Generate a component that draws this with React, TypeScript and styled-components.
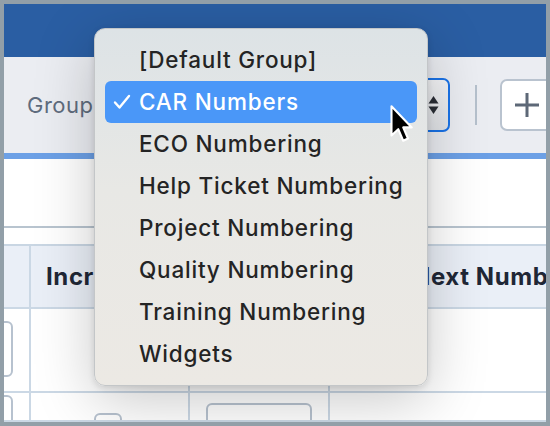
import React from 'react';
import styled, { createGlobalStyle } from 'styled-components';

const GlobalStyle = createGlobalStyle`
  body {
    margin: 0;
    background: #929fa8;
  }
`;

const Frame = styled.div`
  box-sizing: border-box;
  width: 550px;
  height: 426px;
  border: 4px solid #929fa8;
  overflow: hidden;
  position: relative;
  display: flex;
  flex-direction: column;
  background: #fff;
  font-family: 'Inter', 'Liberation Sans', sans-serif;
`;

const TopBar = styled.div`
  flex: 0 0 53px;
  background: #2a5ea3;
`;

const Toolbar = styled.div`
  flex: 0 0 96px;
  background: #ebedf2;
  display: flex;
  align-items: center;
  padding-left: 23px;
  overflow: hidden;
  & > * {
    flex-shrink: 0;
  }
`;

const GroupLabel = styled.span`
  font-size: 22px;
  letter-spacing: 0.5px;
  color: #5f6c7e;
  width: 130px;
`;

const SelectBox = styled.div`
  box-sizing: border-box;
  width: 293px;
  height: 54px;
  border: 2px solid #1a73e8;
  border-radius: 7px;
  background: linear-gradient(#f4f5f7, #e2e4e8);
  display: flex;
  align-items: center;
  justify-content: flex-end;
  padding-right: 9px;
`;

const Divider = styled.div`
  width: 2px;
  height: 40px;
  background: #b5c0cc;
  margin-left: 25px;
`;

const PlusButton = styled.div`
  box-sizing: border-box;
  width: 60px;
  height: 52px;
  margin-left: 23px;
  border: 2px solid #b9c3cf;
  border-radius: 7px;
  background: #fff;
  display: flex;
  align-items: center;
  padding-left: 12px;
`;

const AccentLine = styled.div`
  flex: 0 0 6px;
  background: #6ca0e6;
`;

const Blank = styled.div`
  flex: 0 0 67px;
  border-bottom: 2px solid #b8c4cf;
`;

const Strip = styled.div`
  flex: 0 0 16px;
  border-bottom: 2px solid #c9d6e3;
`;

const Table = styled.div`
  display: grid;
  grid-template-columns: 27px 159px 140px 1fr;
  grid-template-rows: 63px 84px 1fr;
  flex: 1;
`;

const Cell = styled.div<{ $head?: boolean; $last?: boolean }>`
  box-sizing: border-box;
  position: relative;
  border-bottom: 2px solid #cbd8e5;
  border-right: ${(p) => (p.$last ? 'none' : '2px solid #cbd8e5')};
  background: ${(p) => (p.$head ? '#eaeff7' : '#fff')};
  display: flex;
  align-items: center;
  overflow: hidden;
`;

const HeadText = styled.span<{ $pad: number }>`
  padding-left: ${(p) => p.$pad}px;
  font-size: 24px;
  letter-spacing: 0.6px;
  font-weight: 700;
  color: #1f2736;
  white-space: nowrap;
`;

const Field = styled.div<{ $left: number; $top: number; $w: number; $h: number }>`
  position: absolute;
  box-sizing: border-box;
  left: ${(p) => p.$left}px;
  top: ${(p) => p.$top}px;
  width: ${(p) => p.$w}px;
  height: ${(p) => p.$h}px;
  border: 2px solid #b7c2cf;
  border-radius: 6px;
  background: #fff;
`;

const Menu = styled.div`
  position: absolute;
  left: 90px;
  top: 24px;
  width: 334px;
  box-sizing: border-box;
  padding: 10px 10px;
  border-radius: 11px;
  border: 1px solid #c3c6c8;
  background: linear-gradient(#dde3e6 0%, #e8e8e5 45%, #ece9e4 100%);
  box-shadow: 0 14px 60px rgba(0, 0, 0, 0.22), 0 2px 6px rgba(0, 0, 0, 0.12);
`;

const Item = styled.div<{ $active?: boolean }>`
  position: relative;
  height: 42px;
  display: flex;
  align-items: center;
  padding-left: 34px;
  padding-bottom: 1px;
  box-sizing: border-box;
  border-radius: 6px;
  font-size: 22.5px;
  letter-spacing: 0.8px;
  font-weight: 500;
  color: ${(p) => (p.$active ? '#fff' : '#242424')};
  background: ${(p) => (p.$active ? '#4a97f8' : 'transparent')};
`;

const Check = styled.svg`
  position: absolute;
  left: 8px;
  top: 13px;
`;

const Cursor = styled.svg`
  position: absolute;
  left: 381px;
  top: 100px;
`;

const items = [
  '[Default Group]',
  'CAR Numbers',
  'ECO Numbering',
  'Help Ticket Numbering',
  'Project Numbering',
  'Quality Numbering',
  'Training Numbering',
  'Widgets',
];

const App = (): JSX.Element => {
  return (
    <>
      <GlobalStyle />
      <Frame>
        <TopBar />
        <Toolbar>
          <GroupLabel>Group</GroupLabel>
          <SelectBox>
            <svg width="11" height="20" viewBox="0 0 11 20">
              <path d="M5.5 1 L10.5 8.5 H0.5 Z" fill="#2b2f36" />
              <path d="M5.5 19 L10.5 11.5 H0.5 Z" fill="#2b2f36" />
            </svg>
          </SelectBox>
          <Divider />
          <PlusButton>
            <svg width="26" height="26" viewBox="0 0 26 26">
              <path d="M13 1 V25 M1 13 H25" stroke="#5d6877" strokeWidth="3" />
            </svg>
          </PlusButton>
        </Toolbar>
        <AccentLine />
        <Blank />
        <Strip />
        <Table>
          <Cell $head />
          <Cell $head>
            <HeadText $pad={15}>Increment</HeadText>
          </Cell>
          <Cell $head />
          <Cell $head $last>
            <HeadText $pad={82}>Next Number</HeadText>
          </Cell>

          <Cell>
            <Field $left={-40} $top={12} $w={49} $h={56} />
          </Cell>
          <Cell />
          <Cell />
          <Cell $last />

          <Cell>
            <Field $left={-40} $top={2} $w={49} $h={40} />
          </Cell>
          <Cell>
            <Field $left={63} $top={20} $w={28} $h={28} />
          </Cell>
          <Cell>
            <Field $left={16} $top={10} $w={106} $h={40} />
          </Cell>
          <Cell $last />
        </Table>

        <Menu>
          {items.map((label, i) => (
            <Item key={label} $active={i === 1}>
              {i === 1 && (
                <Check width="18" height="16" viewBox="0 0 18 16">
                  <path
                    d="M2 8.5 L6.5 13.5 L16 2"
                    fill="none"
                    stroke="#fff"
                    strokeWidth="2.4"
                    strokeLinecap="round"
                    strokeLinejoin="round"
                  />
                </Check>
              )}
              {label}
            </Item>
          ))}
        </Menu>

        <Cursor width="28" height="42" viewBox="0 0 18 28">
          <path
            d="M4 1.5 L4 21 L8.5 16.8 L11.8 24.5 L15 23 L11.8 15.6 L17.5 15.6 Z"
            fill="#000"
            stroke="#fff"
            strokeWidth="1.4"
            strokeLinejoin="round"
          />
        </Cursor>
      </Frame>
    </>
  );
};

export default App;
